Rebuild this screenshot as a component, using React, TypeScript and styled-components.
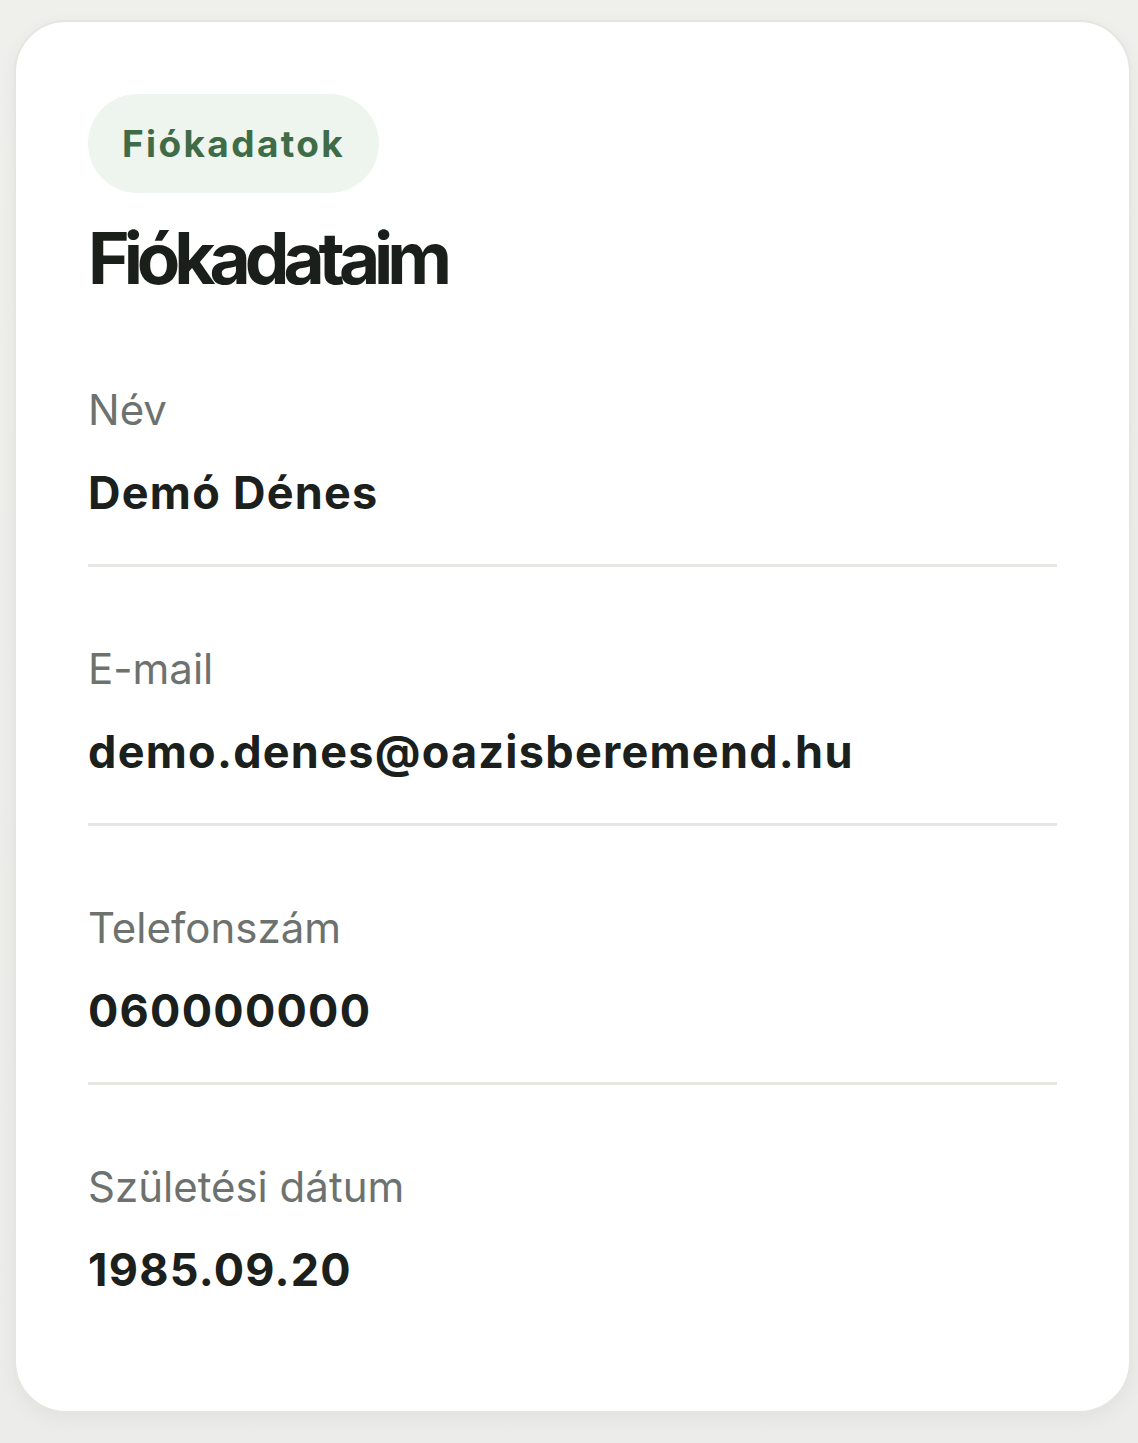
import React from "react";
import styled, { createGlobalStyle } from "styled-components";

const GlobalStyle = createGlobalStyle`
  html, body {
    margin: 0;
    padding: 0;
    background: #efefeb;
  }
  body {
    font-family: Inter, "Noto Sans", "Liberation Sans", sans-serif;
    -webkit-font-smoothing: antialiased;
  }
  * { box-sizing: border-box; }
`;

const Page = styled.div`
  padding: 20px 7px 31px 14px;
  min-height: 1443px;
  background: linear-gradient(180deg, #efefec 0%, #ecedea 100%);
`;

const Card = styled.section`
  width: 1117px;
  background: #ffffff;
  border: 2px solid #e4e6e2;
  border-radius: 52px;
  box-shadow: 0 6px 18px rgba(60, 70, 60, 0.06);
  padding: 72px 72px 119px;
  display: flex;
  flex-direction: column;
`;

const Badge = styled.span`
  align-self: flex-start;
  height: 99px;
  padding: 0 34px;
  display: inline-flex;
  align-items: center;
  border-radius: 50px;
  background: #eef4ee;
  color: #3f6c47;
  font-size: 37px;
  font-weight: 700;
  letter-spacing: 0.064em;
`;

const Title = styled.h1`
  margin: 30px 0 0;
  font-size: 71px;
  line-height: 1;
  font-weight: 700;
  letter-spacing: -0.085em;
  color: #1a1f1b;
`;

const FieldList = styled.dl`
  margin: 95px 0 0;
  display: flex;
  flex-direction: column;
`;

const Field = styled.div<{ $last?: boolean }>`
  padding-bottom: ${(p) => (p.$last ? "0" : "49px")};
  margin-bottom: ${(p) => (p.$last ? "0" : "81px")};
  border-bottom: ${(p) => (p.$last ? "none" : "3px solid #e5e7e3")};
`;

const Label = styled.dt`
  margin: 0;
  font-size: 42px;
  line-height: 1;
  font-weight: 400;
  color: #6d726e;
  letter-spacing: 0;
`;

const Value = styled.dd`
  margin: 39px 0 0;
  font-size: 45px;
  line-height: 1;
  font-weight: 700;
  color: #1b201c;
  letter-spacing: 0.028em;
`;

const fields = [
  { label: "Név", value: "Demó Dénes" },
  { label: "E-mail", value: "demo.denes@oazisberemend.hu" },
  { label: "Telefonszám", value: "060000000" },
  { label: "Születési dátum", value: "1985.09.20" },
];

export default function App() {
  return (
    <>
      <GlobalStyle />
      <Page>
        <Card>
          <Badge>Fiókadatok</Badge>
          <Title>Fiókadataim</Title>
          <FieldList>
            {fields.map((f, i) => (
              <Field key={f.label} $last={i === fields.length - 1}>
                <Label>{f.label}</Label>
                <Value>{f.value}</Value>
              </Field>
            ))}
          </FieldList>
        </Card>
      </Page>
    </>
  );
}
